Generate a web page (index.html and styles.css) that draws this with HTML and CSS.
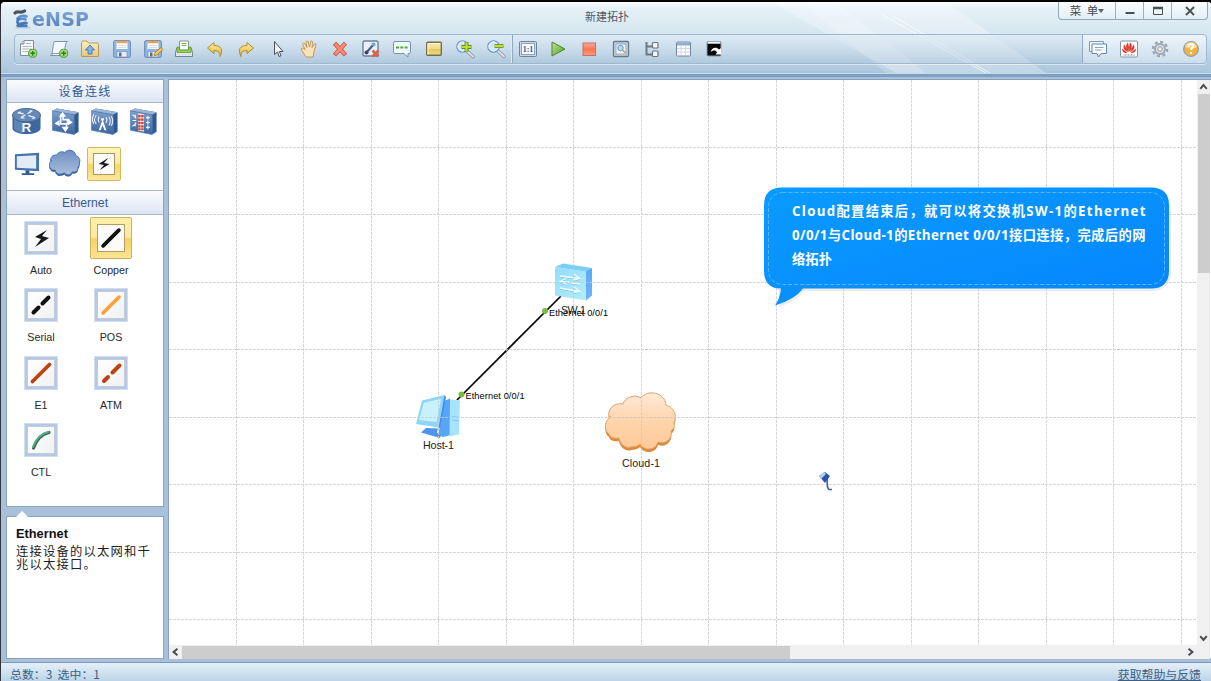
FILE: index.html
```html
<!DOCTYPE html>
<html lang="zh-CN">
<head>
<meta charset="utf-8">
<title>eNSP</title>
<link rel="stylesheet" href="styles.css">
</head>
<body>
<svg class="defs" width="0" height="0" aria-hidden="true">
  <defs>
    <linearGradient id="gold" x1="0" y1="0" x2="0" y2="1"><stop offset="0" stop-color="#fdf0a8"/><stop offset="1" stop-color="#e2b02c"/></linearGradient>
    <linearGradient id="note" x1="0" y1="0" x2="0" y2="1"><stop offset="0" stop-color="#f8ecae"/><stop offset=".5" stop-color="#eedb88"/><stop offset=".55" stop-color="#e3c75e"/><stop offset="1" stop-color="#f0de8c"/></linearGradient>
    <linearGradient id="folder" x1="0" y1="0" x2="0" y2="1"><stop offset="0" stop-color="#fbf0c0"/><stop offset="1" stop-color="#e9c873"/></linearGradient>
    <linearGradient id="green" x1="0" y1="0" x2="1" y2="1"><stop offset="0" stop-color="#c4e49a"/><stop offset="1" stop-color="#4c9a20"/></linearGradient>
    <linearGradient id="red" x1="0" y1="0" x2="0" y2="1"><stop offset="0" stop-color="#f3ada0"/><stop offset=".5" stop-color="#fb7450"/><stop offset="1" stop-color="#ff9a80"/></linearGradient>
    <linearGradient id="device" x1="0" y1="0" x2="0" y2="1"><stop offset="0" stop-color="#7e9fcb"/><stop offset="1" stop-color="#3a659f"/></linearGradient>
    <linearGradient id="cloudBlue" x1="0" y1="0" x2="0" y2="1"><stop offset="0" stop-color="#6d8fc4"/><stop offset="1" stop-color="#a9bddc"/></linearGradient>
    <linearGradient id="cloudPeach" x1="0" y1="0" x2="0" y2="1"><stop offset="0" stop-color="#ffe9d6"/><stop offset=".5" stop-color="#ffd5ae"/><stop offset="1" stop-color="#ffc896"/></linearGradient>
    <linearGradient id="ice" x1="0" y1="0" x2="1" y2="1"><stop offset="0" stop-color="#93dcfa"/><stop offset="1" stop-color="#b4edff"/></linearGradient>
    <linearGradient id="iceSide" x1="0" y1="0" x2="0" y2="1"><stop offset="0" stop-color="#58a8fb"/><stop offset="1" stop-color="#6fb6f8"/></linearGradient>
    <linearGradient id="bubble" x1="0" y1="0" x2="1" y2="1"><stop offset="0" stop-color="#0a9bff"/><stop offset="1" stop-color="#0585fd"/></linearGradient>
    <symbol id="plus" viewBox="0 0 10 10"><circle cx="5" cy="5" r="4.3" fill="#a8da80" stroke="#46962c"/><path d="M5 2.500v5M2.500 5h5" stroke="#2f8018" stroke-width="1.500"/></symbol>
    <symbol id="floppy" viewBox="0 0 20 20"><rect x="1.600" y="1.600" width="16.800" height="16.800" rx="1.500" fill="#8db6e4" stroke="#6b8fbb"/><path d="M4.500 2h11v8h-11z" fill="#fbfcfd"/><path d="M4.500 2h11v2.300h-11z" fill="#f0a24a"/><path d="M6 6.500h8M6 8.500h8" stroke="#d5dce6"/><path d="M5 12.500h10v5.500H5z" fill="#e9edf2" stroke="#7b90ad" stroke-width=".7"/><path d="M7 13.500h2.500v4H7z" fill="#566d8e"/></symbol>
    <symbol id="lens" viewBox="0 0 20 20"><path d="M12 12l6 5.500" stroke="#8a919a" stroke-width="3.600" stroke-linecap="round"/><path d="M12 12l6 5.500" stroke="#dde1e5" stroke-width="2" stroke-linecap="round"/><circle cx="7.500" cy="7.500" r="5.700" fill="#d0e6fa" stroke="#6f98cc" stroke-width="1.300"/><circle cx="7.500" cy="7.500" r="4.500" fill="none" stroke="#f2f8ff"/></symbol>
    <symbol id="slab" viewBox="0 0 30 30"><path d="M1.500 4L6 1.500l22.500 4v20L24 28.500z" fill="#2d5996"/><path d="M1.500 4L6 1.500l22.500 4L24 8z" fill="#9ab5d8"/><path d="M1.500 4L24 8v20.500L1.500 24z" fill="url(#device)" stroke="#547cae" stroke-width=".7"/></symbol>
    <path id="cloudShape" d="M611 416C604 419 604 430 609 433c1 4 6 5 10 4 1 7 8 11 12 9 4 0 7-1 9-3 3 6 15 8 18-2 7 3 15-3 13-11 3-2 4-5 3-8 4-9-1-16-8-18-1-13-19-16-25-7-6-4-16-1-18 6-9-2-16 6-14 13z"/>
  </defs>
</svg>
<div class="window">
  <header class="top">
    <svg class="glare" viewBox="0 0 400 71" preserveAspectRatio="none" aria-hidden="true"><path d="M0 0h175l100 71H125z" fill="#fff" opacity=".28"/><path d="M30 0h35l90 71h-40z" fill="#fff" opacity=".2"/><path d="M110 12L215 71M122 14l97 57" stroke="#fff" opacity=".65"/></svg>
    <div class="titlebar">
      <div class="brand">
        <svg width="19" height="20" viewBox="0 0 18 20"><path d="M1.500 4C4 1 7 5 11 2" fill="none" stroke="#4c535e" stroke-width="3.200" stroke-linecap="round"/><path d="M13 7.500C9 5.500 5 8 4 9.500c2 2 6-1 8 1" fill="none" stroke="#5f90cd" stroke-width="2.600" stroke-linecap="round"/><path d="M5 10c-2 3-1 5 1 5s4-2 7-1M4 16.500c3 2 6-1 9 .5" fill="none" stroke="#4577ba" stroke-width="2.600" stroke-linecap="round"/><path d="M2 18.800h15" stroke="#a9bdd3"/></svg>
        <span class="brand-name">eNSP</span>
      </div>
      <div class="title">新建拓扑</div>
      <div class="window-buttons">
        <span class="menu">菜 单<i class="caret"></i></span>
        <span><svg width="10" height="10"><path d="M.5 7h9" stroke="#484f58" stroke-width="2"/></svg></span>
        <span><svg width="10" height="10"><path d="M.5 1.500h9v7h-9z" fill="none" stroke="#484f58"/><path d="M0 2h10" stroke="#484f58" stroke-width="2.500"/></svg></span>
        <span class="close"><svg width="10" height="10"><path d="M1 1l8 8M9 1L1 9" stroke="#484f58" stroke-width="1.800"/></svg></span>
      </div>
    </div>
    <nav class="toolbar">
      <div class="tools">
        <span><svg viewBox="0 0 20 20"><path d="M6 1.500h9.500v15H2.500V5z" fill="#f5f7f9" stroke="#838d99"/><path d="M6 1.500V5H2.500" fill="#d6dde4" stroke="#838d99"/><path d="M8 4.500h5M4.500 7.500h9M4.500 10h9M4.500 12.500h6" stroke="#b3bac2"/><use href="#plus" x="10" y="9.500" width="9.500" height="9.500"/></svg></span>
        <span><svg viewBox="0 0 20 20"><path d="M5.500 2.500h13c-3 1-2 9-4 14h-13c3-1 1.500-11 4-14z" fill="#f2f8fd" stroke="#7d93ad"/><path d="M1.500 16.500c2 .5 2-2 1.500-2h11" fill="none" stroke="#8aa0bb"/><use href="#plus" x="10" y="9.500" width="9.500" height="9.500"/></svg></span>
        <span><svg viewBox="0 0 20 20"><path d="M1.500 17.500V3.500q0-1.500 1.500-1.500h4l1.500 2H17q1.500 0 1.500 1.500v12z" fill="url(#folder)" stroke="#bd9855"/><path d="M10 6l4.500 5H12v4H8v-4H5.500z" fill="#7bb3f2" stroke="#4176b8" stroke-width=".9"/></svg></span>
        <span><svg viewBox="0 0 20 20"><use href="#floppy"/></svg></span>
        <span><svg viewBox="0 0 20 20"><use href="#floppy"/><path d="M11 17l1-3.500 6-5 2 2-6 5.500z" fill="#f7c84e" stroke="#a97625" stroke-width=".8"/></svg></span>
        <span><svg viewBox="0 0 20 20"><path d="M5.500 10V2h9v8" fill="#fbfcfd" stroke="#8994a2"/><path d="M7.500 4.500h5M7.500 6.500h5" stroke="#76ad62"/><path d="M3 8.500h2.500v3h9v-3H17l1.500 5v4h-17v-4z" fill="#dde4ec" stroke="#71839a"/><path d="M3 8h2.500v3h9V8H17v5.500H3z" fill="#92ce47" stroke="#5f962a" stroke-width=".7"/></svg></span>
        <span><svg viewBox="0 0 20 20"><path d="M2.500 9L9 3.500v3c7 0 9.500 4 6 11 .5-4-1.500-6-6-6v3z" fill="url(#gold)" stroke="#b28a26" stroke-linejoin="round"/></svg></span>
        <span><svg viewBox="0 0 20 20"><path d="M17.500 9L11 3.500v3c-7 0-9.500 4-6 11-.5-4 1.500-6 6-6v3z" fill="url(#gold)" stroke="#b28a26" stroke-linejoin="round"/></svg></span>
        <span><svg viewBox="0 0 20 20"><path d="M6.500 2.500v13l3-2.500 1.500 4.500 2-.8-1.700-4.200h3.700z" fill="#f4f5f7" stroke="#4a525f" stroke-linejoin="round"/></svg></span>
        <span><svg viewBox="0 0 20 20"><path d="M6 16.500L2 10q1-2 4 .5L3.500 5q1-2 2.300-.5L8 8.500 7 3q1-2.500 2.300 0L10.500 8l1-5.500q1.500-1.500 2 .5l-.5 5.500L15.500 5q2-1 1.500 1l-2 6.500-.8 5.500h-7z" fill="#fbe3b9" stroke="#bb8f50" stroke-width=".9" stroke-linejoin="round"/></svg></span>
        <span><svg viewBox="0 0 20 20"><path d="M6 5.800l8 8.700M14 5.800l-8 8.700" stroke="#c9513e" stroke-width="4.400" stroke-linecap="square"/><path d="M6 5.800l8 8.700M14 5.800l-8 8.700" stroke="#fa8a72" stroke-width="2.800" stroke-linecap="square"/></svg></span>
        <span><svg viewBox="0 0 20 20"><rect x="2" y="2" width="15" height="15" rx="1.500" fill="#e9f0f8" stroke="#6982a0" stroke-width="1.400"/><path d="M5.500 13.500l7-8" stroke="#405d83" stroke-width="2"/><circle cx="12.500" cy="5.500" r="2" fill="#7da1cf"/><circle cx="5.500" cy="13.500" r="2" fill="#334b69"/><path d="M11.500 11.500l6 6M17.500 11.500l-6 6" stroke="#df604b" stroke-width="2.800"/></svg></span>
        <span><svg viewBox="0 0 20 20"><path d="M3 2.500h14q1.500 0 1.500 1.500v9q0 1.500-1.500 1.500h-1V18l-4-3.500H3q-1.500 0-1.500-1.500V4q0-1.500 1.500-1.500z" fill="#f1fafc" stroke="#7494b3"/><path d="M4 8.500h12" stroke="#51ad3a" stroke-width="2.200" stroke-dasharray="3 1.300"/></svg></span>
        <span><svg viewBox="0 0 20 20"><rect x="2.700" y="3.200" width="14.600" height="13" rx="1" fill="url(#note)" stroke="#7b6d42" stroke-width="1.400"/><path d="M4 15.500V4.500h12.300" fill="none" stroke="#fff9dc"/></svg></span>
        <span><svg viewBox="0 0 20 20"><use href="#lens"/><path d="M11.500 3v10M6.500 8h10" stroke="#668a1e" stroke-width="3.800"/><path d="M11.500 3.500v9M7 8h9" stroke="#bcdf38" stroke-width="2.200"/></svg></span>
        <span><svg viewBox="0 0 20 20"><use href="#lens"/><path d="M8.500 7h9" stroke="#779c2a" stroke-width="3.800"/><path d="M9 7h8" stroke="#bcdf38" stroke-width="2.200"/></svg></span>
        <span class="group-start"><svg viewBox="0 0 20 20"><rect x="1.500" y="2.500" width="17" height="15" rx="1" fill="#c9d8e8" stroke="#718197"/><rect x="3.500" y="4.500" width="13" height="11" fill="#f8fbff" stroke="#8da4c0"/><text class="one" x="10" y="13" text-anchor="middle">1:1</text></svg></span>
        <span><svg viewBox="0 0 20 20"><path d="M4 3l13 7L4 17z" fill="url(#green)" stroke="#4c8727" stroke-linejoin="round"/></svg></span>
        <span><svg viewBox="0 0 20 20"><rect x="4" y="4" width="12.500" height="12.500" fill="url(#red)" stroke="#bb7669"/></svg></span>
        <span><svg viewBox="0 0 20 20"><rect x="2.500" y="2.500" width="15" height="15" rx="1" fill="#c9d4e0" stroke="#66788e" stroke-width="1.300"/><rect x="5" y="5" width="10" height="10" fill="#eff4f8" stroke="#8ba0b7" stroke-width=".8"/><circle cx="9.500" cy="9" r="2.700" fill="#b1dffb" stroke="#609bcc"/><path d="M11.500 11l3 3" stroke="#d99a45" stroke-width="1.500"/></svg></span>
        <span><svg viewBox="0 0 20 20"><path d="M4.500 3v12.500H10M4.500 7.500H10" fill="none" stroke="#6f7880" stroke-width="2"/><rect x="10.500" y="3.500" width="5.500" height="5.500" rx="1" fill="#f6f9fb" stroke="#69747f" stroke-width="1.200"/><rect x="10.500" y="12" width="5.500" height="5.500" rx="1" fill="#f6f9fb" stroke="#69747f" stroke-width="1.200"/></svg></span>
        <span><svg viewBox="0 0 20 20"><rect x="3.500" y="3" width="14" height="14" rx="1" fill="#fcfdff" stroke="#6f87a8"/><path d="M4 5h13" stroke="#91acd2" stroke-width="3"/><path d="M4 9.500h13M4 13h13M8 7v9M12.500 7v9" stroke="#cfd8e2"/></svg></span>
        <span><svg viewBox="0 0 20 20"><rect x="3" y="2.500" width="14" height="14.500" rx="1" fill="#05070a" stroke="#8c98a7"/><path d="M3.500 3.700h13" stroke="#eef3f8" stroke-width="2"/><path d="M6.500 13c1.500-5 6-5.500 8.500-2.500l2-1.500.5 6.500h-6l1.500-2c-1-2.500-4-2.500-6.500-.5z" fill="#fff"/></svg></span>
      </div>
      <div class="links">
        <span><svg viewBox="0 0 20 20"><path d="M4 12.500H1.500v-10h14V5" fill="#eef5fb" stroke="#7f9bb8"/><path d="M4 5h14.500v9.500H13L10.500 18 9 14.500H4z" fill="#f7fbfe" stroke="#6887a9"/><path d="M7 8.500h8.500M7 11h6.500" stroke="#89a4bf"/></svg></span>
        <span><svg viewBox="0 0 20 20"><rect x="1.500" y="2" width="17" height="16" rx="1" fill="#fbfcfd" stroke="#8097b1"/><g fill="#e3392c"><path d="M9.700 13C5 8 8 4 9 3.500q1.500 4 .7 9.500zM10.300 13C15 8 12 4 11 3.500q-1.500 4-.7 9.500zM9 13.200C3 10.500 4.500 6 5.500 5.500zM11 13.200c6-2.700 4.500-7.200 3.500-7.700zM8.500 14C4 14.500 3 11.500 3.200 9.500zM11.500 14c4.500.500 5.500-2.500 5.300-4.500z"/></g><path d="M4.500 16h11" stroke="#8d8380" stroke-dasharray="1 .5"/></svg></span>
        <span><svg viewBox="0 0 20 20"><circle cx="10" cy="10" r="7.200" fill="none" stroke="#9aa3ab" stroke-width="2.200" stroke-dasharray="3 2.650"/><circle cx="10" cy="10" r="5" fill="#dfe4e8" stroke="#9fa8b0" stroke-width="2"/><circle cx="10" cy="10" r="2.300" fill="#f2f5f8" stroke="#8c959e"/></svg></span>
        <span><svg viewBox="0 0 20 20"><circle cx="10" cy="10" r="7.300" fill="#f2b43e" stroke="#929cab" stroke-width="1.300"/><path d="M4 8a6 5 0 0 1 12 0q-6 3-12 0z" fill="#ffe5a1" opacity=".7"/><path d="M7.300 8c0-4 5.700-3.500 5.200-.500-.2 1.500-2.500 1.500-2.500 3.500M10 13v2" fill="none" stroke="#fff" stroke-width="1.900"/></svg></span>
      </div>
    </nav>
  </header>

  <main class="workspace">
    <aside class="sidebar">
      <section class="panel devices">
        <h2>设备连线</h2>
        <div class="device-grid">
          <span><svg viewBox="0 0 30 30"><path d="M.5 8v14c0 8 29 8 29 0V8z" fill="#3c679f"/><path d="M2 12v11q3 3 9 3.800V14z" fill="#7797c0" opacity=".6"/><ellipse cx="15" cy="8.500" rx="14.500" ry="7" fill="#6588b6" stroke="#416796"/><path d="M6 6l6 1M9 11l5-3M16 7l5-3M17 9l7 2M6 6l3-1M24 11l-3 1M21 4l-3 0M9 11l4 .5" stroke="#e4edf8" stroke-width="1.400"/><text class="router-letter" x="15" y="26" text-anchor="middle">R</text></svg></span>
          <span><svg viewBox="0 0 30 30"><use href="#slab"/><path d="M10 10v7.500h7V13h-5M12.500 8v6M16 17v5M8 17.500H7M17 13h2" fill="none" stroke="#f4f8fd" stroke-width="1.700"/><path d="M3.500 17l5.500-3.500v6.500zM22.500 16l-5-4v7zM12 5l-4 5h7.500zM15 26l-4-5.500h7.500z" fill="#fff"/></svg></span>
          <span><svg viewBox="0 0 30 30"><use href="#slab"/><path d="M13 13L9 24h2l2-5 2 5h2z" fill="#fff"/><circle cx="13" cy="13" r="1.500" fill="#fff"/><path d="M9.500 10q-2 3 0 6M6.500 8.500q-3.500 4.500 0 9M4 7.500q-3 5 0 10M16.500 10.500q2 3 0 6M19.500 10q3 5 0 9M22 9.500q3 5 0 10" fill="none" stroke="#e8f0fa" stroke-width="1.100"/></svg></span>
          <span><svg viewBox="0 0 30 30"><use href="#slab"/><path d="M9.500 6.500l6 1v18l-6-1z" fill="#f0ddd9"/><path d="M9.500 9.500h6M9.500 13h6M9.500 16.500h6M9.500 20h6M9.500 23h6" stroke="#c84637" stroke-width="2.200" stroke-dasharray="2.500 .6"/><path d="M3.500 8l4 3M3.500 14h4M3.500 20l4-3M17.500 11h4M17.500 16h4M17.500 21h4M6.500 8v4M6.500 16v4M19.500 9v4M19.500 14v4M19.500 19v4" stroke="#edf4fc" stroke-width="1.200"/></svg></span>
          <span><svg viewBox="0 0 30 30"><path d="M3 5.500L28 4v19L3 21.500z" fill="#4773ab"/><path d="M5 7.500l20-1v14L5 19.500z" fill="#e3ebf6"/><path d="M14 22h4v3h5v2H10v-2h4z" fill="#335c94"/></svg></span>
          <span><svg class="wide" viewBox="605 390 73 62"><use href="#cloudShape" y="4" fill="#36659e"/><use href="#cloudShape" fill="url(#cloudBlue)" stroke="#456ca5" stroke-width="2"/></svg></span>
          <span class="chosen"><b class="tile"><svg viewBox="0 0 22 22"><path d="M16 4L5 11l6 1-5 6 11-7-6-1z" fill="#15171a"/></svg></b></span>
        </div>
        <h2 class="latin">Ethernet</h2>
        <div class="cable-grid">
          <div class="cable"><b class="tile"><svg viewBox="0 0 28 28"><path d="M20 6L8 13l6 2-6 8 14-9-7-2z" fill="#17191c"/></svg></b><span>Auto</span></div>
          <div class="cable selected"><b class="tile"><svg viewBox="0 0 28 28"><path d="M5.500 22.500l17-17" stroke="#111" stroke-width="4" stroke-linecap="round"/></svg></b><span>Copper</span></div>
          <div class="cable"><b class="tile"><svg viewBox="0 0 28 28"><path d="M6.500 21.500l5-5M15.500 12.500l6-6" stroke="#111" stroke-width="4" stroke-linecap="round"/></svg></b><span>Serial</span></div>
          <div class="cable"><b class="tile"><svg viewBox="0 0 28 28"><path d="M6 22l16-16" stroke="#ffa035" stroke-width="3.500" stroke-linecap="round"/></svg></b><span>POS</span></div>
          <div class="cable"><b class="tile"><svg viewBox="0 0 28 28"><path d="M5.500 22.500l17-17" stroke="#be430e" stroke-width="3.800" stroke-linecap="round"/></svg></b><span>E1</span></div>
          <div class="cable"><b class="tile"><svg viewBox="0 0 28 28"><path d="M7 22l4-4M15.500 13.500l7-7" stroke="#be430e" stroke-width="4" stroke-linecap="round"/></svg></b><span>ATM</span></div>
          <div class="cable"><b class="tile"><svg viewBox="0 0 28 28"><path d="M6.500 22Q11 9 22 6.500" fill="none" stroke="#4d5b57" stroke-width="3.200" stroke-linecap="round"/><path d="M6 21Q11 8 21.500 6" fill="none" stroke="#48b48b" stroke-width="2" stroke-linecap="round"/></svg></b><span>CTL</span></div>
        </div>
      </section>
      <section class="panel details">
        <h3>Ethernet</h3>
        <p>连接设备的以太网和千<br>兆以太接口。</p>
      </section>
    </aside>

    <section class="canvas">
      <svg class="topology" viewBox="169 80 1028 565">
        <path d="M457 400L561 296" stroke="#000" stroke-width="1.700"/>
        <g>
          <path d="M555 267l8-3.500 29 4.500-6 4z" fill="#7bcff6"/><path d="M586 271.500l6-3.500v27.500l-6 5z" fill="url(#iceSide)"/><path d="M555 267l31 4.500v29l-31-5z" fill="url(#ice)"/>
          <path d="M560 277l19 2.500M574 275.500l6 4-7 1.500M580 285l-19-2.500M566 279.500l-6 3 7 3M560 289l19 3.500M574 288l6 4.500-7 1" fill="none" stroke="#79c5e6"/><path d="M560 276l19 2.500M574 274.500l6 4-7 1.500M580 284l-19-2.500M566 278.500l-6 3 7 3M560 288l19 3.500M574 287l6 4.500-7 1" fill="none" stroke="#f3fdff" stroke-width="1.300"/>
        </g>
        <g>
          <path d="M444 401l6-2.500 1 36.500-8.500 2-4-3z" fill="#55a6f7"/><path d="M450 399.500l10 1-1 34-9.500 2z" fill="#a6e4fd"/><path d="M452 416.500l7 1M452 420l7 1" stroke="#7cc6f0"/>
          <path d="M426 428l12 .500-1 4 4 3-1 2.500-19-5.500z" fill="#4d94ed"/><path d="M422 400.500l22.500-5.500-6 32.500-22.500-3.500z" fill="#8ed5fb"/><path d="M444.500 395l1.500 2-6 31-1.500-.5z" fill="#3f8ee8"/><path d="M424 402.500l17-3.500-4.500 23-17.500-2z" fill="#c9f2ff"/>
        </g>
        <use href="#cloudShape" y="4" fill="#dc8b3a"/>
        <use href="#cloudShape" y="1" fill="url(#cloudPeach)" stroke="#dda36b"/>
        <g class="grid-lines">
          <path d="M236.500 80v565M303.500 80v565M371.500 80v565M438.500 80v565M506.500 80v565M573.500 80v565M641.500 80v565M708.500 80v565M776.500 80v565M843.500 80v565M911.500 80v565M978.500 80v565M1046.500 80v565M1113.500 80v565M1181.500 80v565"/>
          <path d="M169 147.500h1028M169 214.500h1028M169 282.500h1028M169 349.500h1028M169 417.500h1028M169 484.500h1028M169 552.500h1028M169 619.500h1028"/>
        </g>
        <circle cx="545" cy="311" r="3" fill="#75bf3e"/><circle cx="461.500" cy="394.500" r="3" fill="#75bf3e"/>
        <g class="labels">
          <text x="561" y="314" textLength="25">SW-1</text>
          <text class="port" x="549" y="315.500" textLength="59">Ethernet 0/0/1</text>
          <text class="port" x="465.500" y="399" textLength="59">Ethernet 0/0/1</text>
          <text x="423" y="449" textLength="31">Host-1</text>
          <text x="622" y="467" textLength="38">Cloud-1</text>
        </g>
        <g>
          <path d="M779 289h26q-7 12-26 18z" fill="#cdd3da" opacity=".4"/>
          <rect x="766" y="190" width="405" height="101" rx="18" fill="#cbd2da" opacity=".4"/>
          <path d="M782 187.500h369q18 0 18 18v65q0 18-18 18H803q-8 11-28 17 5-7 6-17-17 0-17-18v-65q0-18 18-18z" fill="url(#bubble)"/>
          <rect x="768.500" y="192.500" width="396" height="92" rx="14" fill="none" stroke="#5cb6ff" stroke-dasharray="4 2"/>
          <g class="speech"><text x="792" y="216" textLength="353.500">Cloud配置结束后，就可以将交换机SW-1的Ethernet</text><text x="792" y="240" textLength="353.500">0/0/1与Cloud-1的Ethernet 0/0/1接口连接，完成后的网</text><text x="792" y="263.500" textLength="40">络拓扑</text></g>
        </g>
        <g><path d="M827 479c1 4-1 8 2 10.500h3" fill="none" stroke="#4a5c9b" stroke-width="1.600"/><path d="M819 476l6-4 5 4-5 7z" fill="#2855b5"/><path d="M819 476l5-4 2 2-5 5z" fill="#b4cbe2"/></g>
      </svg>
      <div class="vbar"><svg class="arrow" viewBox="0 0 10 10"><path d="M2.500 6.500l2.500-3 2.500 3"/></svg><div class="vthumb"></div><svg class="arrow end" viewBox="0 0 10 10"><path d="M2.500 3.500l2.500 3 2.500-3"/></svg></div>
      <div class="hbar"><svg class="arrow" viewBox="0 0 10 10"><path d="M6.500 2.500l-3 2.500 3 2.500"/></svg><div class="hthumb"></div><svg class="arrow end" viewBox="0 0 10 10"><path d="M3.500 2.500l3 2.500-3 2.500"/></svg></div>
      <div class="bar-corner"></div>
    </section>
  </main>

  <footer class="status"><span>总数：3&nbsp; 选中：1</span><a>获取帮助与反馈</a></footer>
</div>
</body>
</html>
```

FILE: styles.css
```css
* { box-sizing: border-box; }
body {
  margin: 0;
  width: 1211px;
  height: 681px;
  overflow: hidden;
  background: linear-gradient(#050304 0 2px, #34353f 12px);
  font-family: "Liberation Sans", "Noto Sans CJK SC", sans-serif;
}
.defs { position: absolute; }
.window {
  display: flex;
  flex-direction: column;
  height: 679px;
  margin: 2px 0 0 1px;
  background: #a8c0da;
  border-radius: 4px 3px 0 0;
  overflow: hidden;
}
.top {
  position: relative;
  flex: none;
  height: 72px;
  background: linear-gradient(#fafdfe 0, #e5f1f7 6px, #d5e6f0 33px, #b9d0e3 56px, #abc7dd 70px);
  border-bottom: 1px solid #c4d9ea;
}
.glare { position: absolute; right: 40px; top: 0; width: 400px; height: 71px; }
.titlebar {
  position: relative;
  display: grid;
  grid-template-columns: 1fr 100px 1fr;
  height: 32px;
}
.brand { display: flex; align-items: flex-start; padding: 7px 0 0 12px; }
.brand-name {
  font: bold 19px/20px "DejaVu Sans", sans-serif;
  letter-spacing: .2px;
  background: linear-gradient(#82a9d8, #527fb9);
  background-clip: text;
  color: transparent;
}
.title { padding-left: 2px; text-align: center; color: #4e5964; font: 11px/28px "Noto Sans CJK SC", sans-serif; }
.window-buttons {
  justify-self: end;
  display: flex;
  height: 18px;
  margin-right: 3px;
  border: 1px solid #92a8bc;
  border-top: 0;
  border-radius: 0 0 4px 4px;
  background: linear-gradient(#fafdff, #e3eef6);
}
.window-buttons span { width: 28px; display: flex; align-items: center; justify-content: center; border-left: 1px solid #9bb0c2; }
.window-buttons .menu { width: 56px; border-left: 0; color: #424a53; font: 11.5px/17px "Noto Sans CJK SC", sans-serif; word-spacing: 3px; }
.window-buttons .close { width: 36px; }
.caret { border: 3px solid transparent; border-top: 4px solid #59616a; border-bottom: 0; }
.toolbar {
  position: relative;
  display: flex;
  justify-content: space-between;
  height: 30px;
  margin: 0 4px 0 13px;
  border: 1px solid #9fb8cf;
  border-radius: 4px;
  background: linear-gradient(rgba(224,236,245,.7), rgba(170,195,218,.35));
  box-shadow: 0 1px rgba(255,255,255,.5);
}
.tools { display: flex; margin-left: -2.5px; }
.tools span { width: 31.2px; display: flex; align-items: center; justify-content: center; }
.tools svg, .links svg { width: 20px; height: 20px; }
.tools .group-start { border-left: 1px solid #92abc4; box-shadow: -1px 0 #dcebf6; }
.one { font: bold 8px "Liberation Serif", serif; fill: #34558d; }
.links {
  display: flex;
  width: 124px;
  border-left: 1px solid #91aac2;
  background: linear-gradient(#edf5fa, #cbddec);
  border-radius: 0 4px 4px 0;
}
.links span { flex: 1; display: flex; align-items: center; justify-content: center; }

.workspace {
  flex: 1;
  min-height: 0;
  display: flex;
  gap: 4px;
  padding: 5px 0 3px 5px;
  background: #a8c0da;
  box-shadow: inset 0 3px #7d9fc3;
}
.sidebar { width: 158px; display: flex; flex-direction: column; gap: 9px; }
.panel { background: #fff; border: 1px solid #8aa3c1; }
.devices { height: 428px; }
.details { position: relative; flex: 1; padding: 8px 8px 8px 9px; }
.details::before {
  content: "";
  position: absolute;
  left: 9px;
  top: -6px;
  border: 6px solid transparent;
  border-top: 0;
  border-bottom-color: #fff;
}
h2 {
  margin: 0;
  height: 23px;
  border-bottom: 1px solid #a9b7c8;
  background: linear-gradient(#fafbfd, #dde5f4);
  color: #345b94;
  text-align: center;
  font: 12px/21px "Noto Sans CJK SC", sans-serif;
  letter-spacing: 1.3px;
}
h2.latin { height: 25px; border-top: 1px solid #a9b7c8; font: 12.2px/24px "Liberation Sans", sans-serif; letter-spacing: 0; }
.device-grid { display: grid; grid-template-columns: repeat(4, 39px); grid-auto-rows: 41.5px; height: 87px; }
.device-grid > span { display: flex; align-items: center; justify-content: center; margin: -2px 1px 2px 0; }
.device-grid svg { flex: none; width: 29px; height: 29px; }
.device-grid .wide { width: 32px; height: 28px; }
.router-letter { font: bold 14px "Liberation Sans", sans-serif; fill: #fff; }
.device-grid .chosen {
  width: 34px;
  height: 34px;
  margin: 2px 0 0 2px;
  border: 1px solid #d5b85b;
  border-radius: 2px;
  background: linear-gradient(#fff5b9, #fbe9a8 48%, #f8d666 52%, #fbe79b);
}
.chosen .tile { width: 22px; height: 22px; border: 1px solid #ae975a; background: #fbfbfa; }
.device-grid .chosen svg { width: 20px; height: 20px; display: block; }
.cable-grid { display: grid; grid-template-columns: 70px 70px; grid-auto-rows: 67.4px; }
.cable { display: flex; flex-direction: column; align-items: center; gap: 2px; color: #25272b; font: 10.7px/14px "Liberation Sans", sans-serif; padding-top: 6px; margin: 0 1px 0 -1px; }
.cable .tile {
  width: 34px;
  height: 34px;
  margin-bottom: 6px;
  border: 3px solid #b5c9e6;
  outline: 1px solid #d2deef;
  outline-offset: -1px;
  background: linear-gradient(135deg, #fff, #f0f1f3);
  box-shadow: inset 0 0 0 1px #c3cbd7;
}
.cable .tile svg { display: block; width: 28px; height: 28px; }
.cable.selected { padding-top: 2px; gap: 0; }
.cable.selected .tile {
  width: 42px;
  height: 42px;
  padding: 6px;
  border: 1px solid #cdb15b;
  border-radius: 2px;
  outline: 0;
  box-shadow: none;
  background: linear-gradient(#fff0a7, #fbe8a8 48%, #f8d161 52%, #fbe592);
  margin-bottom: 4px;
}
.cable.selected svg { background: #fbfbfa; border: 1px solid #b69e60; }
h3 { margin: 0; font: bold 12.8px/17px "Liberation Sans", sans-serif; color: #111; }
p { margin: 3px 0 0; color: #222; font: 12.3px/13px "Noto Sans CJK SC", sans-serif; letter-spacing: 1.2px; white-space: nowrap; }

.canvas {
  flex: 1;
  display: grid;
  grid-template: 565px 14px / 1028px 13px;
  background: #fff;
  border: 1px solid #879fbb;
  border-right: 0;
}
.topology { display: block; width: 1028px; height: 565px; }
.grid-lines { fill: none; stroke: #cacbd0; stroke-width: 1; stroke-dasharray: 3 1; opacity: .8; }
.labels { font: 10.7px "Liberation Sans", sans-serif; fill: #202226; }
.labels .port { font-size: 9.2px; fill: #000; }
.speech { font: bold 13.3px "Open Sans", "Noto Sans CJK SC", sans-serif; fill: #fff; }
.vbar, .hbar { display: flex; background: #f0f0f1; }
.vbar { flex-direction: column; align-items: center; }
.hbar { align-items: center; }
.vthumb { width: 12px; height: 179px; background: #cdcdcd; }
.hthumb { width: 608px; height: 13px; background: #cdcdcd; }
.arrow { flex: none; width: 13px; height: 14px; fill: none; stroke: #484b50; stroke-width: 1.5; }
.vbar .end { margin-top: auto; }
.hbar .end { margin-left: auto; }
.bar-corner { background: #f0f0f1; }

.status {
  flex: none;
  display: flex;
  justify-content: space-between;
  height: 19px;
  padding: 0 10px 0 9px;
  border-top: 1px solid #8099b4;
  background: linear-gradient(#e4f0f8, #bcd4e7);
  color: #3d6087;
  font: 11.9px/21px "Noto Sans CJK SC", sans-serif;
}
.status a { text-decoration: underline; text-underline-offset: 1px; }
```
